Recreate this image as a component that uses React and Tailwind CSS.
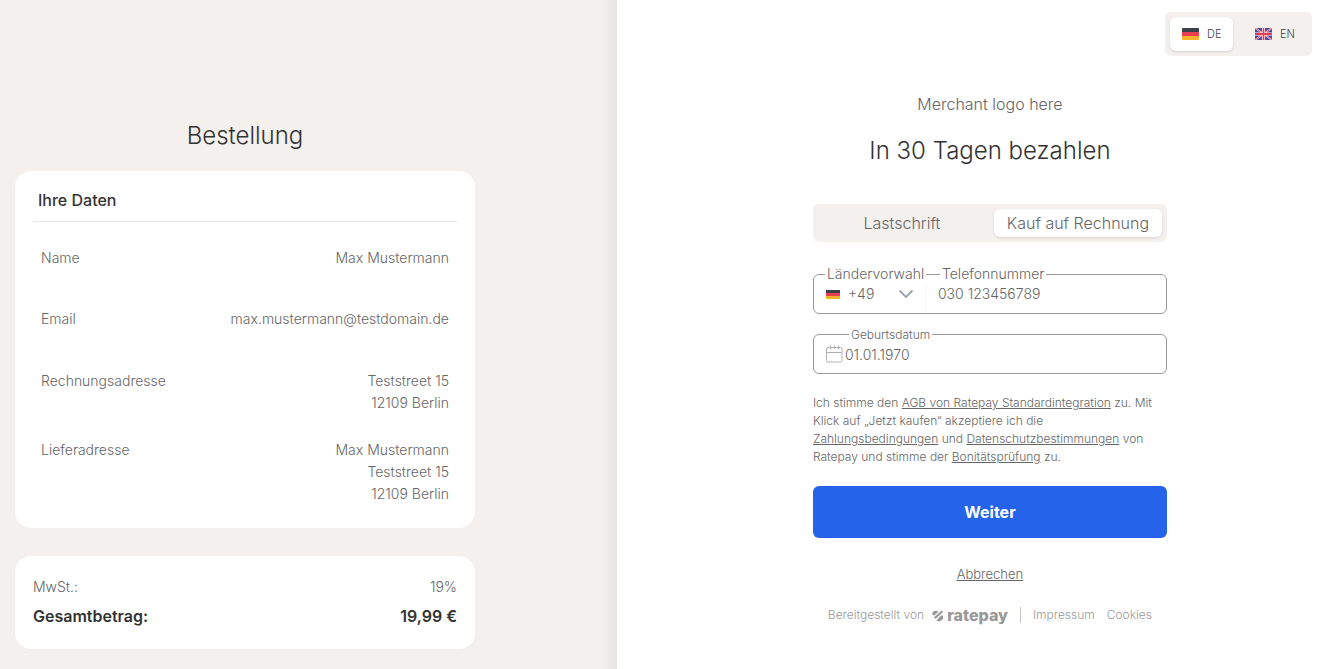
// src/App.jsx
import React, { useState } from "react";

const customer = [
  { label: "Name", lines: ["Max Mustermann"], space: "mb-[39px]" },
  { label: "Email", lines: ["max.mustermann@testdomain.de"], space: "mb-10" },
  { label: "Rechnungsadresse", lines: ["Teststreet 15", "12109 Berlin"], space: "mb-[25px]" },
  { label: "Lieferadresse", lines: ["Max Mustermann", "Teststreet 15", "12109 Berlin"], space: "mb-0" },
];

const GermanFlag = ({ className }) => (
  <svg viewBox="0 0 17 12" preserveAspectRatio="none" className={className} aria-hidden="true">
    <rect width="17" height="4" fill="#3d3f4b" />
    <rect y="4" width="17" height="4" fill="#ea3d50" />
    <rect y="8" width="17" height="4" fill="#f8b32d" />
  </svg>
);

const BritishFlag = ({ className }) => (
  <svg viewBox="0 0 17 12" className={className} aria-hidden="true">
    <rect width="17" height="12" fill="#414ba0" />
    <path d="M0 0l17 12M17 0L0 12" stroke="#f0c8d0" strokeWidth="1.800" />
    <path d="M0 0l17 12M17 0L0 12" stroke="#ea4a5c" strokeWidth="0.800" />
    <path d="M8.5 0v12M0 6h17" stroke="#fff" strokeWidth="3.2" />
    <path d="M8.5 0v12M0 6h17" stroke="#ea3d50" strokeWidth="1.8" />
  </svg>
);

const ChevronIcon = () => (
  <svg viewBox="0 0 16 10" className="h-[10px] w-4 shrink-0" fill="none" stroke="#94a3b8" strokeWidth="1.8" aria-hidden="true">
    <path d="M1.5 1.5L8 8l6.500-6.500" />
  </svg>
);

const CalendarIcon = () => (
  <svg viewBox="0 0 17 18" className="h-[18px] w-[17px] shrink-0" fill="none" stroke="#b0b0b0" aria-hidden="true">
    <rect x="0.500" y="2.500" width="15.500" height="14.500" rx="1.500" />
    <path d="M0.500 7.500h15.500M4.500 0.500v4M8.500 0.500v3M12.500 0.500v4" />
  </svg>
);

const RatepayLogo = () => (
  <span className="flex items-center gap-[3px] text-[#999]">
    <svg viewBox="0 0 12 12" className="mt-[2px] h-3 w-3" fill="currentColor" aria-hidden="true">
      <path d="M0.300 3.800C0.300 1.800 1.800 0.800 3.600 0.800c1.200 0 2.100.4 2.600 1L2.400 5.400C1.100 5.400.3 4.900.3 3.800z" />
      <path d="M9.300 0.800c.9 0 1.500.6 1.500 1.400L4.400 8.200c-1 .7-2.300.2-2.600-.6z" />
      <path d="M11.200 6.800c0 2.800-1.800 4.500-4.400 4.500-1.100 0-1.900-.3-2.400-.8L9.300 5.200c1.200 0 1.900.5 1.900 1.600z" />
    </svg>
    <span className="text-base leading-4 font-extrabold">ratepay</span>
  </span>
);

const LanguageSwitch = ({ language, setLanguage }) => {
  const active = "bg-white shadow-sm";
  return (
    <div className="flex rounded-md bg-[#f3f0ed] p-[5px] text-[11px] text-[#444]">
      <button
        onClick={() => setLanguage("de")}
        className={`flex h-[34px] w-[63px] items-center gap-2 rounded-md pl-3 ${language === "de" ? active : ""}`}
      >
        <GermanFlag className="h-3 w-[17px] rounded-[1px]" />
        DE
      </button>
      <button
        onClick={() => setLanguage("en")}
        className={`ml-[10px] flex h-[34px] w-16 items-center gap-2 rounded-md pl-3 ${language === "en" ? active : ""}`}
      >
        <BritishFlag className="h-3 w-[17px] rounded-[1px]" />
        EN
      </button>
    </div>
  );
};

const OrderSummary = () => (
  <section className="flex w-7/15 flex-col bg-[#f3f0ed] bg-[linear-gradient(to_left,#e8e4e2,#f3f0ed_16px)] px-[15px]">
    <div className="w-full max-w-[460px] pt-[120px]">
      <h1 className="text-center text-2xl leading-8 text-[#333]">Bestellung</h1>
      <div className="mt-[19px] rounded-2xl bg-white px-[18px] pt-[17px] pb-[23px]">
        <h2 className="border-b border-[#e5e5e5] px-[5px] pb-[9px] text-base font-medium text-[#333]">Ihre Daten</h2>
        <dl className="px-2 pt-[25px]">
          {customer.map((row) => (
            <div key={row.label} className={`flex justify-between text-sm leading-[22px] ${row.space}`}>
              <dt>{row.label}</dt>
              <dd className="text-right">
                {row.lines.map((line) => (
                  <div key={line}>{line}</div>
                ))}
              </dd>
            </div>
          ))}
        </dl>
      </div>
      <dl className="mt-7 rounded-2xl bg-white px-[18px] pt-5 pb-[21px]">
        <div className="flex justify-between text-sm leading-[22px]">
          <dt>MwSt.:</dt>
          <dd>19%</dd>
        </div>
        <div className="mt-1.5 flex justify-between text-base font-semibold text-[#333]">
          <dt>Gesamtbetrag:</dt>
          <dd>19,99 €</dd>
        </div>
      </dl>
    </div>
  </section>
);

const PaymentForm = () => {
  const [method, setMethod] = useState("invoice");
  const [phone, setPhone] = useState("030 123456789");
  const [birthday, setBirthday] = useState("01.01.1970");
  const active = "bg-white shadow-sm";

  return (
    <form className="flex w-full max-w-[354px] flex-col" onSubmit={(e) => e.preventDefault()}>
      <p className="text-center text-base">Merchant logo here</p>
      <h1 className="mt-[19px] text-center text-2xl leading-8 text-[#333]">In 30 Tagen bezahlen</h1>

      <div className="mt-[37px] flex h-[38px] gap-2 rounded-md bg-[#f3f0ed] p-[5px] text-base">
        <button
          type="button"
          onClick={() => setMethod("debit")}
          className={`flex flex-1 items-center justify-center rounded-md ${method === "debit" ? active : ""}`}
        >
          Lastschrift
        </button>
        <button
          type="button"
          onClick={() => setMethod("invoice")}
          className={`flex flex-1 items-center justify-center rounded-md ${method === "invoice" ? active : ""}`}
        >
          Kauf auf Rechnung
        </button>
      </div>

      <div className="mt-8 flex h-10 rounded-md border border-[#999] text-sm">
        <div className="relative flex w-28 items-center border-r border-[#f5f5f5] pl-3">
          <label htmlFor="prefix" className="absolute -top-[11px] left-[11px] bg-white px-0.5 leading-5">
            Ländervorwahl
          </label>
          <GermanFlag className="h-[9px] w-[14px] shrink-0" />
          <select id="prefix" className="ml-2 w-[50px] appearance-none bg-transparent outline-none">
            <option>+49</option>
            <option>+43</option>
          </select>
          <ChevronIcon />
        </div>
        <div className="relative flex flex-1">
          <label htmlFor="phone" className="absolute -top-[11px] left-[14px] bg-white px-0.5 leading-5">
            Telefonnummer
          </label>
          <input
            id="phone"
            type="tel"
            value={phone}
            onChange={(e) => setPhone(e.target.value)}
            className="w-full min-w-0 px-3 outline-none"
          />
        </div>
      </div>

      <div className="relative mt-5 flex h-10 items-center gap-[2px] rounded-md border border-[#999] px-3 text-sm">
        <label htmlFor="birthday" className="absolute -top-3 left-[35px] bg-white px-0.5 text-xs leading-6">
          Geburtsdatum
        </label>
        <CalendarIcon />
        <input
          id="birthday"
          type="text"
          value={birthday}
          onChange={(e) => setBirthday(e.target.value)}
          className="w-full min-w-0 pt-0.5 outline-none"
        />
      </div>

      <p className="mt-5 text-xs leading-[18px]">
        Ich stimme den <a href="#agb" className="underline">AGB von Ratepay Standardintegration</a> zu. Mit
        Klick auf „Jetzt kaufen“ akzeptiere ich die{" "}
        <a href="#zahlung" className="underline">Zahlungsbedingungen</a> und{" "}
        <a href="#datenschutz" className="underline">Datenschutzbestimmungen</a> von Ratepay und stimme der{" "}
        <a href="#bonitaet" className="underline">Bonitätsprüfung</a> zu.
      </p>

      <button type="submit" className="mt-5 h-[52px] rounded-md bg-[#2563eb] text-base font-bold text-white">
        Weiter
      </button>
      <a href="#abbrechen" className="mt-[26px] self-center text-[13px] leading-5 underline">
        Abbrechen
      </a>
      <footer className="mt-[21px] flex items-center justify-center text-xs leading-5 whitespace-nowrap text-[#999]">
        <span className="mr-2">Bereitgestellt von</span>
        <RatepayLogo />
        <span className="mx-3 h-4 w-px bg-[#c8c4c0]" />
        <a href="#impressum">Impressum</a>
        <a href="#cookies" className="ml-3">Cookies</a>
      </footer>
    </form>
  );
};

const App = () => {
  const [language, setLanguage] = useState("de");

  return (
    <div className="flex min-h-screen bg-white font-['Inter',sans-serif] font-light text-[#666]">
      <OrderSummary />
      <main className="flex flex-1 flex-col">
        <div className="flex justify-end pt-3 pr-[10px]">
          <LanguageSwitch language={language} setLanguage={setLanguage} />
        </div>
        <div className="flex justify-center pt-9 pl-[41px]">
          <PaymentForm />
        </div>
      </main>
    </div>
  );
};

export default App;
